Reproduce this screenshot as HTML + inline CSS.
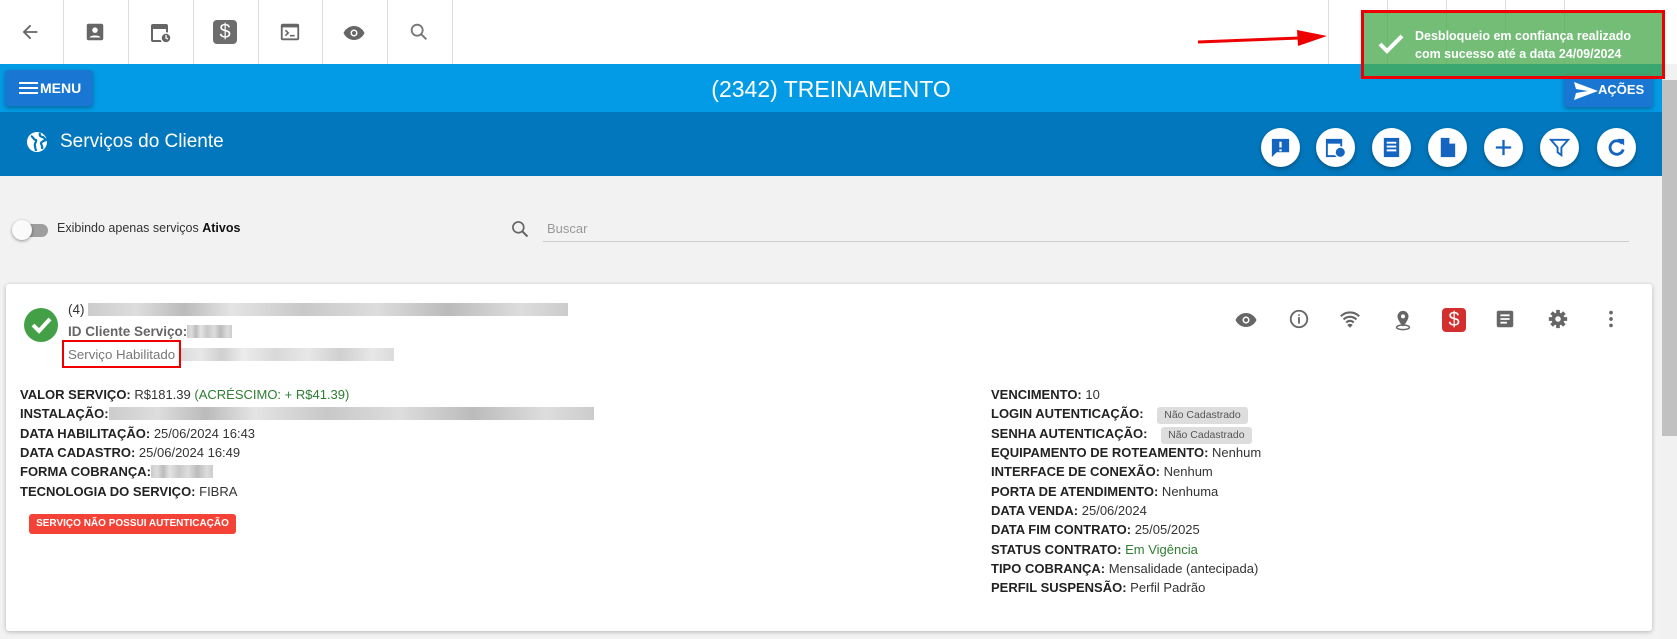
<!DOCTYPE html>
<html><head><meta charset="utf-8"><style>
*{box-sizing:border-box;margin:0;padding:0}
body{width:1677px;height:639px;overflow:hidden;background:#f2f2f2;font-family:"Liberation Sans",Arial,sans-serif;position:relative;color:#222}
.abs{position:absolute}
.top{left:0;top:0;width:1677px;height:64px;background:#fff}
.sep{position:absolute;top:0;width:1px;height:64px;background:#ddd}
.ti{position:absolute;top:21px}
.bar{left:0;top:64px;width:1662px;height:48px;background:#039be5}
.hdr{left:0;top:112px;width:1662px;height:64px;background:#0277bd}
.btn{background:#1976d2;border-radius:3px;color:#fff;font-weight:bold;font-size:14px;box-shadow:0 2px 4px rgba(0,0,0,.3)}
.cb{position:absolute;top:128px;width:39px;height:39px;border-radius:50%;background:#fff;box-shadow:0 2px 4px rgba(0,0,0,.3)}
.cb svg{position:absolute;left:8px;top:8px}
.card{left:6px;top:284px;width:1646px;height:347px;background:#fff;border-radius:3px;box-shadow:0 1px 4px rgba(0,0,0,.25)}
.f{position:absolute;font-size:13px;line-height:19px;height:19px;white-space:nowrap;color:#333}
.f b{color:#222}
.blur{display:inline-block;height:13px;vertical-align:-2px;background:linear-gradient(90deg,#ccc,#ddd 10%,#bbb 20%,#e4e4e4 30%,#c8c8c8 45%,#ddd 60%,#bbb 75%,#ddd 90%,#ccc)}
.ai{position:absolute;top:308px}
.tag{display:inline-block;background:#ddd;color:#555;font-size:10.5px;line-height:13px;padding:2px 7px;border-radius:3px;margin-left:10px;vertical-align:0}
</style></head><body>
<div class="abs top">
 <div class="sep" style="left:63px"></div><div class="sep" style="left:128px"></div><div class="sep" style="left:193px"></div><div class="sep" style="left:258px"></div><div class="sep" style="left:322px"></div><div class="sep" style="left:387px"></div><div class="sep" style="left:452px"></div>
 <div class="sep" style="left:1328px"></div><div class="sep" style="left:1387px"></div><div class="sep" style="left:1446px"></div><div class="sep" style="left:1505px"></div><div class="sep" style="left:1564px"></div>
 <svg class="ti" style="left:19px" width="22" height="22" viewBox="0 0 24 24"><path d="M20 11H7.8l5.6-5.6L12 4l-8 8 8 8 1.4-1.4L7.8 13H20z" fill="#666"/></svg>
 <svg class="ti" style="left:84px" width="22" height="22" viewBox="0 0 24 24"><rect x="3" y="3" width="18" height="18" rx="2" fill="#666"/><circle cx="12" cy="10" r="3" fill="#fff"/><path d="M6 18c1-3 11-3 12 0z" fill="#fff"/></svg>
 <svg class="ti" style="left:149px" width="24" height="24" viewBox="0 0 24 24"><rect x="3" y="4" width="15" height="16" rx="1" fill="none" stroke="#666" stroke-width="2"/><rect x="3" y="4" width="15" height="4" fill="#666"/><circle cx="17" cy="17" r="5" fill="#666" stroke="#fff" stroke-width="1.5"/><path d="M17 14v3l2 1" stroke="#fff" fill="none" stroke-width="1.3"/></svg>
 <div class="abs" style="left:213px;top:20px;width:24px;height:24px;background:#6d6d6d;border-radius:4px;color:#fff;font-size:20px;text-align:center;line-height:24px">$</div>
 <svg class="ti" style="left:279px" width="22" height="22" viewBox="0 0 24 24"><rect x="3" y="4" width="18" height="16" rx="1" fill="none" stroke="#666" stroke-width="2"/><rect x="3" y="4" width="18" height="3" fill="#666"/><path d="M7 10l3 3-3 3M12 16h5" stroke="#666" stroke-width="1.8" fill="none"/></svg>
 <svg class="ti" style="left:342px" width="24" height="24" viewBox="0 0 24 24"><path d="M12 5C7 5 3 8.5 1.5 12 3 15.5 7 19 12 19s9-3.5 10.5-7C21 8.5 17 5 12 5z" fill="#666"/><circle cx="12" cy="12" r="3.5" fill="#fff"/><circle cx="12" cy="12" r="2" fill="#666"/></svg>
 <svg class="ti" style="left:408px" width="22" height="22" viewBox="0 0 24 24"><circle cx="10" cy="10" r="6" fill="none" stroke="#777" stroke-width="2"/><path d="M14.5 14.5L20 20" stroke="#777" stroke-width="2.2"/></svg>
</div>
<div class="abs bar"></div>
<div class="abs btn" style="left:5px;top:70px;width:88px;height:36px;line-height:36px;padding-left:35px">MENU
 <svg class="abs" style="left:14px;top:11px" width="20" height="14"><path d="M0 2h19M0 7h19M0 12h19" stroke="#fff" stroke-width="2"/></svg></div>
<div class="abs" style="left:0;width:1662px;top:74px;text-align:center;color:#fff;font-size:23px;line-height:30px">(2342) TREINAMENTO</div>
<div class="abs btn" style="left:1564px;top:73px;width:89px;height:34px;line-height:34px;padding-left:34px;font-size:13px">AÇÕES
 <svg class="abs" style="left:10px;top:9px" width="24" height="18" viewBox="0 0 24 18"><path d="M0 0l24 9L0 18l2-7 12-2-12-2z" fill="#fff"/></svg></div>
<div class="abs hdr"></div>
<svg class="abs" style="left:25px;top:130px" width="24" height="24" viewBox="0 0 24 24"><circle cx="12" cy="12" r="10" fill="#fff"/><path d="M6 6c3 1 2 4 5 4 1 2-2 3-1 6 0 2 1 4 1 5M15 3c-1 3 1 4 3 4l3 3c-2 1-4 1-5 3 0 2 2 3 1 6" stroke="#0277bd" stroke-width="2.2" fill="none"/></svg>
<div class="abs" style="left:60px;top:131px;color:#fff;font-size:19px">Serviços do Cliente</div>
<div class="cb" style="left:1261px"><svg width="23" height="23" viewBox="0 0 24 24"><path d="M3 3h18v14H8l-5 5z" fill="#1565c0"/><path d="M12 6v6M12 14v2" stroke="#fff" stroke-width="2.4"/></svg></div>
<div class="cb" style="left:1316px"><svg width="23" height="23" viewBox="0 0 24 24"><rect x="3" y="4" width="15" height="17" fill="none" stroke="#1565c0" stroke-width="2"/><rect x="3" y="4" width="15" height="4" fill="#1565c0"/><circle cx="17" cy="17" r="5.5" fill="#1565c0" stroke="#fff" stroke-width="1.5"/></svg></div>
<div class="cb" style="left:1372px"><svg width="23" height="23" viewBox="0 0 24 24"><rect x="4" y="2" width="16" height="20" fill="#1565c0"/><path d="M7 7h10M7 11h10M7 15h10" stroke="#fff" stroke-width="2"/></svg></div>
<div class="cb" style="left:1428px"><svg width="23" height="23" viewBox="0 0 24 24"><path d="M5 2h9l6 6v14H5z" fill="#1565c0"/><path d="M14 2v6h6" fill="#fff"/></svg></div>
<div class="cb" style="left:1484px"><svg width="23" height="23" viewBox="0 0 24 24"><path d="M12 4v16M4 12h16" stroke="#1565c0" stroke-width="2.4"/></svg></div>
<div class="cb" style="left:1540px"><svg width="23" height="23" viewBox="0 0 24 24"><path d="M3 4h18l-7 8v8l-4-3v-5z" fill="none" stroke="#1565c0" stroke-width="2"/></svg></div>
<div class="cb" style="left:1597px"><svg width="23" height="23" viewBox="0 0 24 24"><path d="M18 8a7 7 0 1 0 1 6" fill="none" stroke="#1565c0" stroke-width="3"/><path d="M13 3h7v7z" fill="#1565c0"/></svg></div>
<div class="abs" style="left:1662px;top:64px;width:15px;height:575px;background:#f1f1f1"></div>
<div class="abs" style="left:1662px;top:80px;width:15px;height:356px;background:#c1c1c1"></div>
<div class="abs" style="left:16px;top:224px;width:32px;height:13px;border-radius:7px;background:#9e9e9e"></div>
<div class="abs" style="left:12px;top:220px;width:20px;height:20px;border-radius:50%;background:#fafafa;box-shadow:0 1px 3px rgba(0,0,0,.4)"></div>
<div class="abs" style="left:57px;top:221px;font-size:12.5px;color:#333">Exibindo apenas serviços <b style="color:#111">Ativos</b></div>
<svg class="abs" style="left:510px;top:219px" width="20" height="20" viewBox="0 0 24 24"><circle cx="10" cy="10" r="6.5" fill="none" stroke="#666" stroke-width="2"/><path d="M15 15l6 6" stroke="#666" stroke-width="2.4"/></svg>
<div class="abs" style="left:547px;top:221px;font-size:13px;color:#999">Buscar</div>
<div class="abs" style="left:543px;top:241px;width:1086px;height:1px;background:#ccc"></div>
<div class="abs card"></div>
<svg class="abs" style="left:24px;top:308px" width="34" height="34" viewBox="0 0 34 34"><circle cx="17" cy="17" r="17" fill="#43a047"/><path d="M9 17l6 6 11-12" stroke="#fff" stroke-width="4" fill="none"/></svg>
<div class="f" style="left:68px;top:300px;font-size:13.5px">(4) <span class="blur" style="width:480px"></span></div>
<div class="f" style="left:68px;top:322px;color:#666;font-weight:bold;font-size:13.5px">ID Cliente Serviço:<span class="blur" style="width:45px"></span></div>
<div class="f" style="left:68px;top:345px;color:#777;font-size:13.3px">Serviço Habilitado <span class="blur" style="width:215px;opacity:.7"></span></div>
<div class="abs" style="left:62px;top:340px;width:119px;height:28px;border:2px solid #e00"></div>
<div class="f" style="left:20px;top:385px"><b>VALOR SERVIÇO:</b> R$181.39 <span style="color:#2e7d32">(ACRÉSCIMO: + R$41.39)</span></div>
<div class="f" style="left:20px;top:404px"><b>INSTALAÇÃO:</b><span class="blur" style="width:485px"></span></div>
<div class="f" style="left:20px;top:424px"><b>DATA HABILITAÇÃO:</b> 25/06/2024 16:43</div>
<div class="f" style="left:20px;top:443px"><b>DATA CADASTRO:</b> 25/06/2024 16:49</div>
<div class="f" style="left:20px;top:462px"><b>FORMA COBRANÇA:</b><span class="blur" style="width:62px"></span></div>
<div class="f" style="left:20px;top:482px"><b>TECNOLOGIA DO SERVIÇO:</b> FIBRA</div>
<div class="abs" style="left:29px;top:514px;width:207px;height:20px;background:#f44336;border-radius:3px;color:#fff;font-size:10px;font-weight:bold;text-align:center;line-height:20px">SERVIÇO NÃO POSSUI AUTENTICAÇÃO</div>
<div class="f" style="left:991px;top:385px"><b>VENCIMENTO:</b> 10</div>
<div class="f" style="left:991px;top:404px"><b>LOGIN AUTENTICAÇÃO:</b> <span class="tag">Não Cadastrado</span></div>
<div class="f" style="left:991px;top:424px"><b>SENHA AUTENTICAÇÃO:</b> <span class="tag">Não Cadastrado</span></div>
<div class="f" style="left:991px;top:443px"><b>EQUIPAMENTO DE ROTEAMENTO:</b> Nenhum</div>
<div class="f" style="left:991px;top:462px"><b>INTERFACE DE CONEXÃO:</b> Nenhum</div>
<div class="f" style="left:991px;top:482px"><b>PORTA DE ATENDIMENTO:</b> Nenhuma</div>
<div class="f" style="left:991px;top:501px"><b>DATA VENDA:</b> 25/06/2024</div>
<div class="f" style="left:991px;top:520px"><b>DATA FIM CONTRATO:</b> 25/05/2025</div>
<div class="f" style="left:991px;top:540px"><b>STATUS CONTRATO:</b> <span style="color:#2e7d32">Em Vigência</span></div>
<div class="f" style="left:991px;top:559px"><b>TIPO COBRANÇA:</b> Mensalidade (antecipada)</div>
<div class="f" style="left:991px;top:578px"><b>PERFIL SUSPENSÃO:</b> Perfil Padrão</div>
<svg class="ai" style="left:1234px" width="24" height="24" viewBox="0 0 24 24"><path d="M12 5C7 5 3 8.5 1.5 12 3 15.5 7 19 12 19s9-3.5 10.5-7C21 8.5 17 5 12 5z" fill="#666"/><circle cx="12" cy="12" r="3.5" fill="#fff"/><circle cx="12" cy="12" r="2" fill="#666"/></svg>
<svg class="ai" style="left:1288px" width="22" height="22" viewBox="0 0 24 24"><circle cx="12" cy="12" r="9" fill="none" stroke="#666" stroke-width="2"/><path d="M12 10v7M12 7v1.5" stroke="#666" stroke-width="2"/></svg>
<svg class="ai" style="left:1339px" width="22" height="22" viewBox="0 0 24 24"><path d="M2 9a14 14 0 0 1 20 0M5 12.5a10 10 0 0 1 14 0M8 16a5 5 0 0 1 8 0" stroke="#666" stroke-width="2.3" fill="none"/><path d="M9 18.5l3 3 3-3a4 4 0 0 0-6 0z" fill="#666"/></svg>
<svg class="ai" style="left:1392px" width="22" height="24" viewBox="0 0 24 24"><path d="M12 2a6 6 0 0 0-6 6c0 4.5 6 11 6 11s6-6.5 6-11a6 6 0 0 0-6-6z" fill="#666"/><circle cx="12" cy="8" r="2.2" fill="#fff"/><ellipse cx="12" cy="20" rx="7" ry="2.5" fill="none" stroke="#666" stroke-width="1.6"/></svg>
<div class="abs" style="left:1442px;top:308px;width:24px;height:24px;background:#d32f2f;border-radius:4px;color:#fff;font-size:20px;text-align:center;line-height:24px">$</div>
<svg class="ai" style="left:1494px" width="22" height="22" viewBox="0 0 24 24"><rect x="3" y="3" width="18" height="18" rx="2" fill="#666"/><path d="M7 8h10M7 12h10M7 16h7" stroke="#fff" stroke-width="2"/></svg>
<svg class="ai" style="left:1547px" width="22" height="22" viewBox="0 0 24 24"><circle cx="12" cy="12" r="7" fill="#666"/><g stroke="#666" stroke-width="4"><path d="M12 2v20M2 12h20M5 5l14 14M19 5L5 19"/></g><circle cx="12" cy="12" r="3" fill="#fff"/></svg>
<svg class="ai" style="left:1600px" width="22" height="22" viewBox="0 0 24 24"><circle cx="12" cy="5" r="2" fill="#666"/><circle cx="12" cy="12" r="2" fill="#666"/><circle cx="12" cy="19" r="2" fill="#666"/></svg>
<div class="abs" style="left:1361px;top:10px;width:304px;height:69px;border:3px solid #e00"></div>
<div class="abs" style="left:1364px;top:13px;width:298px;height:63px;background:rgba(76,170,80,.78)"></div>
<svg class="abs" style="left:1378px;top:33px" width="26" height="22" viewBox="0 0 26 22"><path d="M2 11l7 7L24 3" stroke="#fff" stroke-width="4" fill="none"/></svg>
<div class="abs" style="left:1415px;top:27px;color:#fff;font-weight:bold;font-size:12.5px;line-height:18px">Desbloqueio em confiança realizado<br>com sucesso até a data 24/09/2024</div>
<svg class="abs" style="left:1190px;top:25px" width="145" height="25"><path d="M8 17L110 13" stroke="#e00" stroke-width="3"/><path d="M107 5l30 6-29 10z" fill="#e00"/></svg>
</body></html>
